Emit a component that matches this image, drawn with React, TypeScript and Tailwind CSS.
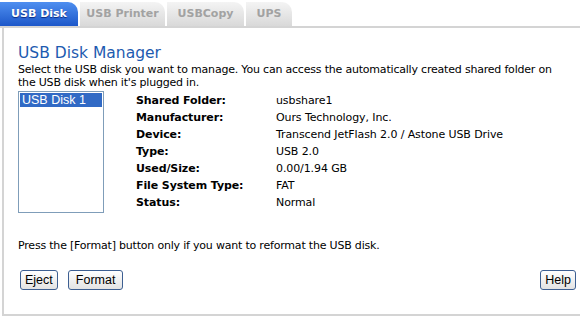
import React from "react";

const rows: [string, string][] = [
  ["Shared Folder:", "usbshare1"],
  ["Manufacturer:", "Ours Technology, Inc."],
  ["Device:", "Transcend JetFlash 2.0 / Astone USB Drive"],
  ["Type:", "USB 2.0"],
  ["Used/Size:", "0.00/1.94 GB"],
  ["File System Type:", "FAT"],
  ["Status:", "Normal"],
];

const tabs = ["USB Printer", "USBCopy", "UPS"];

function Btn({ label, wide }: { label: string; wide?: boolean }) {
  return (
    <button
      className={`flex items-center h-[20px] rounded-[3px] border border-[#3d5f92] bg-gradient-to-b from-white to-[#e3e3e3] text-[12.5px] leading-none text-black font-['Liberation_Sans',Arial,sans-serif] ${
        wide ? "px-[7px]" : "px-[4px]"
      }`}
    >
      {label}
    </button>
  );
}

export default function App() {
  return (
    <div className="w-[580px] h-[335px] bg-white font-['DejaVu_Sans',Tahoma,sans-serif] text-black">
      <div className="flex items-end h-[28px] border-b-2 border-[#d4d4d4]">
        <div className="w-[78px] h-[24px] rounded-tr-[10px] bg-gradient-to-b from-[#4f8ff0] to-[#1d57c9] flex items-center justify-center text-white text-[11px] font-bold [text-shadow:0_1px_1px_#0a2a80]">
          USB Disk
        </div>
        {tabs.map((t, i) => (
          <div
            key={t}
            className={`ml-[2px] h-[24px] rounded-tr-[10px] bg-gradient-to-b from-[#f4f4f4] to-[#d9d9d9] flex items-center justify-center text-[#a2a2a2] text-[11px] font-bold ${
              i === 0 ? "w-[85px]" : i === 1 ? "w-[77px]" : "w-[46px]"
            }`}
          >
            {t}
          </div>
        ))}
      </div>
      <div className="ml-[2px] h-[288px] border-l-2 border-b-2 border-[#d4d4d4] pl-[14px] pt-[16px]">
        <div className="text-[#1d5bb0] text-[15.5px] leading-[19px]">USB Disk Manager</div>
        <p className="text-[11px] leading-[13px] tracking-[-0.2px] w-[550px]">
          Select the USB disk you want to manage. You can access the automatically created shared folder on the USB disk when it's plugged in.
        </p>
        <div className="flex mt-[2px]">
          <div className="w-[86px] h-[122px] border border-[#7f9db9] p-[1px]">
            <div className="bg-[#316ac5] text-white text-[12.5px] leading-[14px] pl-[2px] font-['Liberation_Sans',Arial,sans-serif]">
              USB Disk 1
            </div>
          </div>
          <div className="ml-[32px] mt-[2px] text-[11px] tracking-[-0.1px]">
            {rows.map(([k, v]) => (
              <div key={k} className="flex h-[17px] items-center">
                <div className="w-[140px] font-bold">{k}</div>
                <div>{v}</div>
              </div>
            ))}
          </div>
        </div>
        <p className="text-[11px] tracking-[-0.2px] mt-[26px] leading-[13px]">
          Press the [Format] button only if you want to reformat the USB disk.
        </p>
        <div className="flex items-center mt-[18px] pr-[4px]">
          <div className="ml-[2px] flex gap-[10px]">
            <Btn label="Eject" />
            <Btn label="Format" wide />
          </div>
          <div className="ml-auto">
            <Btn label="Help" />
          </div>
        </div>
      </div>
    </div>
  );
}
